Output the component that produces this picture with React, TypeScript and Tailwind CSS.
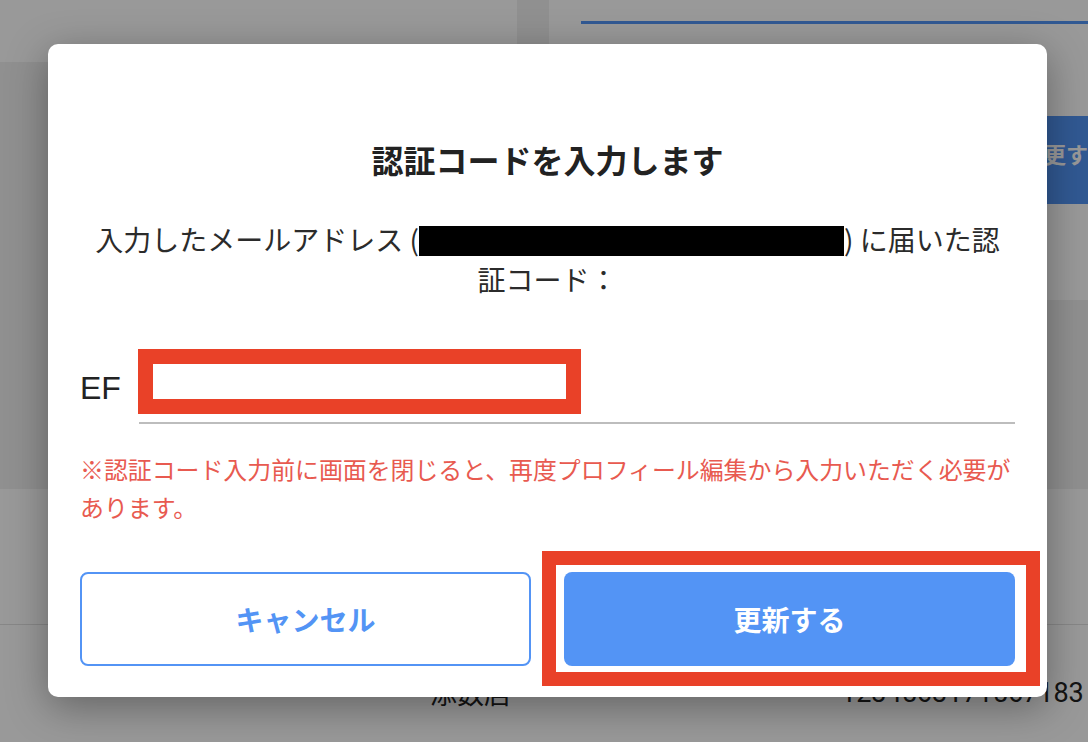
import React from "react";

const jp = "font-['Noto_Sans_CJK_JP','Noto_Sans',sans-serif]";

const VerifyCodeDialog = () => {
    return (
        <div className="absolute inset-0">
            <div className="absolute inset-0 bg-black/40" />
            <div className="absolute inset-0 pl-[48px] pt-[44px]">
                <div className="relative w-[999px] rounded-[10px] bg-white px-[32px] pb-[31px] pt-[95px] shadow-[0_10px_40px_rgba(0,0,0,0.35)]">
                    <h2 className="text-center text-[32px] font-bold leading-[40px] text-[#222]">
                        認証コードを入力します
                    </h2>
                    <p className="mt-[40px] text-center text-[28px] leading-[40px] text-[#2b2b2b]">
                        <span className="whitespace-nowrap">
                            入力したメールアドレス (
                            <span className="inline-block h-[30px] w-[425px] bg-black align-[-5px]" />
                            ) に届いた認
                        </span>
                        <br />
                        証コード：
                    </p>

                    <div className="mt-[63px] flex items-center">
                        <span className="mb-[10px] w-[59px] font-['Liberation_Sans',sans-serif] text-[32px] leading-[40px] text-[#222]">
                            EF
                        </span>
                        <div className="h-[62px] flex-1 border-b-2 border-[#bdbdbd]" />
                    </div>

                    <p className="mt-[26px] whitespace-nowrap text-[23.9px] leading-[38px] text-[#e85a50]">
                        ※認証コード入力前に画面を閉じると、再度プロフィール編集から入力いただく必要が
                        <br />
                        あります。
                    </p>

                    <div className="mt-[46px] grid grid-cols-2 gap-[33px]">
                        <button className="h-[94px] rounded-[8px] border-2 border-[#5394f5] bg-white text-[28px] font-bold text-[#5394f5]">
                            キャンセル
                        </button>
                        <button className="h-[94px] rounded-[8px] bg-[#5394f5] text-[28px] font-bold text-white">
                            更新する
                        </button>
                    </div>

                    {/* annotation boxes */}
                    <div className="absolute left-[90px] top-[305px] h-[65px] w-[443px] border-[15px] border-[#e94128]" />
                    <div className="absolute left-[494px] top-[507px] h-[135px] w-[498px] border-[14px] border-[#e94128]" />
                </div>
            </div>
        </div>
    );
};

const App = () => {
    return (
        <div className={`relative h-[742px] w-full overflow-hidden bg-[#f0f0f0] ${jp}`}>
            {/* page behind the dialog */}
            <div className="flex items-start gap-[32px]">
                <div className="h-[62px] w-[517px] shrink-0 bg-white" />
                <div className="h-[300px] min-w-0 flex-1 bg-white pl-[32px]">
                    <div className="h-[24px] border-b-[3px] border-[#5294f5]">
                        <p className="-translate-y-[33px] whitespace-nowrap pl-[80px] text-[26px] leading-[30px] text-[#222]">
                            my.jpgp@gmail.pg
                        </p>
                    </div>
                    <button className="ml-[385px] mt-[92px] flex h-[88px] w-[200px] items-center justify-center rounded-[6px] bg-[#5294f5] pb-[14px] text-[22px] font-bold text-white">
                        変更する
                    </button>
                </div>
            </div>
            <div className="mt-[189px] bg-white">
                <div className="h-[136px] border-b border-[#e2e2e2]" />
                <div className="flex h-[136px] items-center whitespace-nowrap text-[27px] text-[#222]">
                    <span className="ml-[430px]">添数店</span>
                    <span className="ml-[330px] font-['Roboto',sans-serif]">1234563171567183</span>
                </div>
            </div>

            <VerifyCodeDialog />
        </div>
    );
};

export default App;
